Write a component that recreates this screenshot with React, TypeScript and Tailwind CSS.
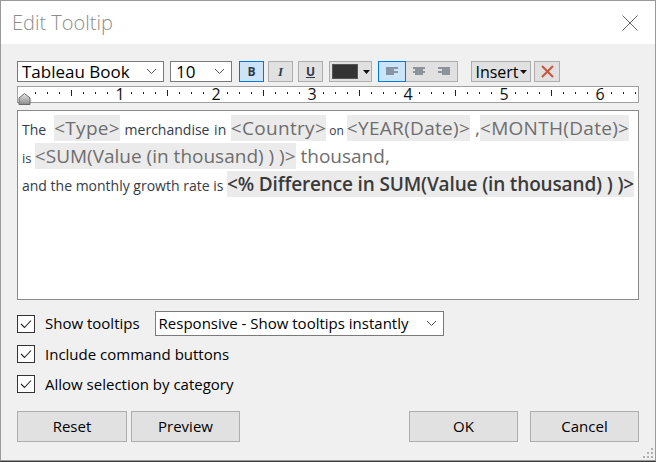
import React from "react"

const ui = "font-['Open_Sans','Noto_Sans',sans-serif]"

function Chevron() {
  return (
    <svg width="11" height="7" viewBox="0 0 11 7" className="shrink-0">
      <path d="M1 1 L5.5 5.5 L10 1" fill="none" stroke="#555" strokeWidth="1" />
    </svg>
  )
}

function Caret() {
  return (
    <svg width="7" height="4" viewBox="0 0 7 4" className="shrink-0">
      <path d="M0 0 H7 L3.5 4 Z" fill="#111" />
    </svg>
  )
}

function AlignIcon({ kind }: { kind: "left" | "center" | "right" }) {
  const rows = [12, 8, 12, 8]
  return (
    <svg width="12" height="9" viewBox="0 0 12 9">
      {rows.map((w, i) => {
        const x = kind === "left" ? 0 : kind === "right" ? 12 - w : (12 - w) / 2
        return <rect key={i} x={x} y={i * 2 + 0.5} width={w} height="1" fill="#3c4656" />
      })}
    </svg>
  )
}

const rulerNums = [
  { n: "1", left: "left-[92px]" },
  { n: "2", left: "left-[188px]" },
  { n: "3", left: "left-[284px]" },
  { n: "4", left: "left-[380px]" },
  { n: "5", left: "left-[476px]" },
  { n: "6", left: "left-[572px]" },
]

function Ruler() {
  const ticks = []
  for (let k = 1; k < 52; k++) {
    if (k % 8 === 0) continue
    const x = 5 + k * 12
    if (x > 618) break
    const half = k % 4 === 0
    ticks.push(<rect key={k} x={x} y={half ? 3 : 5} width="1" height={half ? 6 : 2} fill="#222" />)
  }
  return (
    <div className="relative mt-[4px] h-[17px] w-[622px] border border-[#a0a0a0] bg-white">
      <svg width="620" height="15" viewBox="0 0 620 15" className="block">
        {ticks}
      </svg>
      {rulerNums.map((r) => (
        <span
          key={r.n}
          className={`absolute top-0 ${r.left} w-[20px] text-center text-[16px] leading-[15px] text-[#111]`}
        >
          {r.n}
        </span>
      ))}
      <svg width="13" height="12" viewBox="0 0 13 12" className="absolute left-[0px] top-[6px]">
        <defs>
          <linearGradient id="mk" x1="0" y1="0" x2="0" y2="1">
            <stop offset="0" stopColor="#e8e8e8" />
            <stop offset="1" stopColor="#8a8a8a" />
          </linearGradient>
        </defs>
        <path d="M6.5 0.5 L12 5 V11.5 H1 V5 Z" fill="url(#mk)" stroke="#6a6a6a" strokeWidth="1" />
      </svg>
    </div>
  )
}

function Field({
  children,
  bold = false,
  track = "tracking-[0.3px]",
}: {
  children: React.ReactNode
  bold?: boolean
  track?: string
}) {
  return (
    <span
      className={`inline-block h-[26px] bg-[#ebebeb] text-[19px] leading-[26px] ${track} ${
        bold ? "font-semibold text-[#3a3a3a]" : "text-[#6e6e6e]"
      }`}
    >
      {children}
    </span>
  )
}

function Check({ label }: { label: string }) {
  return (
    <div className="flex h-[18px] items-center">
      <div className="flex h-[18px] w-[18px] items-center justify-center border border-[#333] bg-white">
        <svg width="12" height="10" viewBox="0 0 12 10">
          <path d="M1 5 L4.5 8.5 L11 1.5" fill="none" stroke="#222" strokeWidth="1.1" />
        </svg>
      </div>
      <span className="ml-[10px] text-[15px] leading-none text-black">{label}</span>
    </div>
  )
}

function Btn({ label, w }: { label: string; w: string }) {
  return (
    <div
      className={`flex h-[31px] ${w} items-center justify-center border border-[#adadad] bg-[#e1e1e1] text-[15px] text-black`}
    >
      {label}
    </div>
  )
}

export default function App() {
  return (
    <div className={`h-[462px] w-[656px] overflow-hidden bg-[#3a3a3a] ${ui}`}>
      <div className="flex h-[461px] w-[656px] flex-col border border-[#9a9a9a] bg-[#f0f0f0]">
        {/* title bar */}
        <div className="flex h-[43px] shrink-0 items-center justify-between bg-white pl-[11px] pr-[17px]">
          <span className="text-[20px] font-light text-[#8c8c8c]">Edit Tooltip</span>
          <svg width="16" height="16" viewBox="0 0 16 16">
            <path d="M0.5 0.5 L15.5 15.5 M15.5 0.5 L0.5 15.5" stroke="#666" strokeWidth="1" />
          </svg>
        </div>

        <div className="flex flex-col pl-[16px]">
          {/* toolbar */}
          <div className="mt-[17px] flex h-[21px] items-stretch">
            <div className="flex w-[147px] items-center justify-between border border-[#7a7a7a] bg-white pl-[4px] pr-[6px] text-[17px] leading-none text-black">
              <span>Tableau Book</span>
              <Chevron />
            </div>
            <div className="ml-[6px] flex w-[62px] items-center justify-between border border-[#7a7a7a] bg-white pl-[5px] pr-[6px] text-[17px] leading-none text-black">
              <span>10</span>
              <Chevron />
            </div>
            <div className="ml-[7px] flex w-[25px] items-center justify-center border border-[#0078d7] bg-[#cce4f7] text-[12px] font-bold text-[#2f3b4d]">
              B
            </div>
            <div className="ml-[4px] flex w-[25px] items-center justify-center border border-[#adadad] bg-[#e1e1e1] font-['Liberation_Serif',serif] text-[13px] font-bold italic text-[#2f3b4d]">
              I
            </div>
            <div className="ml-[5px] flex w-[25px] items-center justify-center border border-[#adadad] bg-[#e1e1e1] text-[12px] font-bold text-[#2f3b4d] underline">
              U
            </div>
            <div className="ml-[6px] flex w-[43px] items-center border border-[#adadad] bg-[#e1e1e1] pl-[2px]">
              <div className="h-[15px] w-[26px] border border-[#555] bg-[#333]" />
              <div className="ml-[5px]">
                <Caret />
              </div>
            </div>
            <div className="ml-[6px] flex w-[80px] border border-[#adadad] bg-[#e1e1e1]">
              <div className="-my-px -ml-px flex w-[28px] items-center justify-center border border-[#0078d7] bg-[#cce4f7]">
                <AlignIcon kind="left" />
              </div>
              <div className="flex w-[26px] items-center justify-center">
                <AlignIcon kind="center" />
              </div>
              <div className="flex w-[26px] items-center justify-center">
                <AlignIcon kind="right" />
              </div>
            </div>
            <div className="ml-[13px] flex w-[60px] items-center justify-center border border-[#adadad] bg-[#e1e1e1] text-[16px] leading-none text-black">
              <span>Insert</span>
              <span className="ml-[1px]">
                <Caret />
              </span>
            </div>
            <div className="ml-[3px] flex w-[26px] items-center justify-center border border-[#adadad] bg-[#e1e1e1]">
              <svg width="13" height="13" viewBox="0 0 13 13">
                <path d="M1 1 L12 12 M12 1 L1 12" stroke="#c9553d" strokeWidth="2" />
              </svg>
            </div>
          </div>

          <Ruler />

          {/* text area */}
          <div className="mt-[7px] h-[190px] w-[622px] border border-[#8a8a8a] bg-white pl-[4px] pt-[4px] text-[#343b48]">
            <div className="h-[27px] whitespace-nowrap leading-[27px]">
              <span className="text-[14px]">The</span>
              <span className="inline-block w-[8px]" />
              <Field>&lt;Type&gt;</Field>
              <span className="text-[14px] [word-spacing:1px]">{"  merchandise in "}</span>
              <Field>&lt;Country&gt;</Field>
              <span className="text-[12px]"> on </span>
              <Field>&lt;YEAR(Date)&gt;</Field>
              <span className="text-[19px] text-[#6e6e6e]"> ,</span>
              <Field>&lt;MONTH(Date)&gt;</Field>
            </div>
            <div className="mt-[1px] h-[27px] whitespace-nowrap leading-[27px]">
              <span className="text-[13px]">is </span>
              <Field track="tracking-normal">&lt;SUM(Value (in thousand) ) )&gt;</Field>
              <span className="text-[19px] text-[#6e6e6e]"> thousand,</span>
            </div>
            <div className="mt-[1px] h-[27px] whitespace-nowrap leading-[27px]">
              <span className="text-[14px]">and the monthly growth rate is </span>
              <Field bold track="tracking-[-0.15px]">
                &lt;% Difference in SUM(Value (in thousand) ) )&gt;
              </Field>
            </div>
          </div>

          {/* options */}
          <div className="mt-[11px] flex h-[25px] items-center">
            <Check label="Show tooltips" />
            <div className="ml-[15px] flex h-[25px] w-[289px] items-center justify-between border border-[#7a7a7a] bg-white pl-[3px] pr-[6px] text-[15px] text-black">
              <span>Responsive - Show tooltips instantly</span>
              <Chevron />
            </div>
          </div>
          <div className="mt-[9px]">
            <Check label="Include command buttons" />
          </div>
          <div className="mt-[12px]">
            <Check label="Allow selection by category" />
          </div>

          {/* buttons */}
          <div className="mt-[18px] flex w-[622px] items-center">
            <Btn label="Reset" w="w-[110px]" />
            <div className="ml-[4px]">
              <Btn label="Preview" w="w-[109px]" />
            </div>
            <div className="ml-auto">
              <Btn label="OK" w="w-[109px]" />
            </div>
            <div className="ml-[12px]">
              <Btn label="Cancel" w="w-[109px]" />
            </div>
          </div>
        </div>

        <div className="mt-auto flex justify-end pb-[2px] pr-[2px]">
          <svg width="10" height="10" viewBox="0 0 10 10">
            {[
              [8, 0],
              [8, 4],
              [4, 4],
              [8, 8],
              [4, 8],
              [0, 8],
            ].map(([x, y], i) => (
              <rect key={i} x={x} y={y} width="2" height="2" fill="#b0b0b0" />
            ))}
          </svg>
        </div>
      </div>
    </div>
  )
}
